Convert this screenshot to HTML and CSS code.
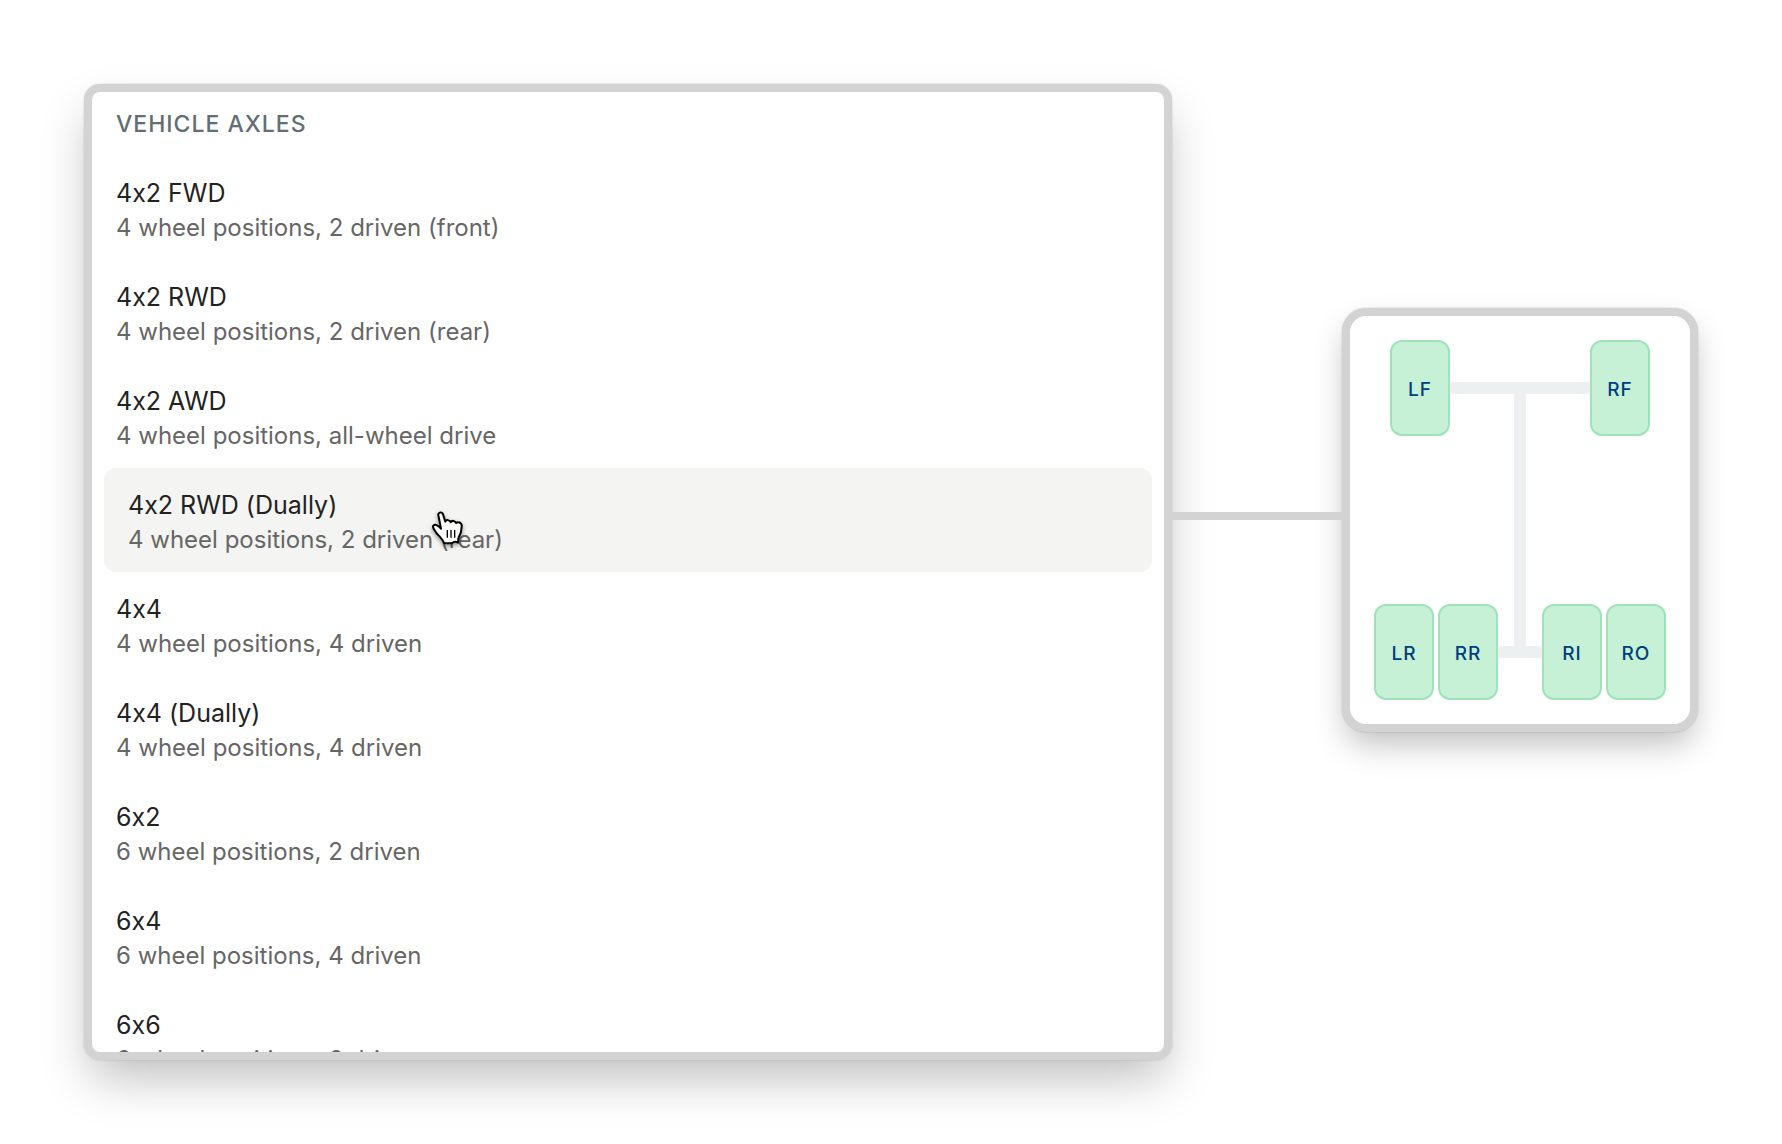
FILE: index.html
```
<!DOCTYPE html>
<html lang="en">
<head>
    <meta charset="utf-8">
    <meta name="viewport" content="width=device-width, initial-scale=1.0">
    <title>Vehicle Axles</title>
    <link rel="stylesheet" href="styles.css">
</head>
<body>
    <main class="stage">
        <section class="panel">
            <h2 class="panel-title">Vehicle Axles</h2>
            <button class="option"><span class="name">4x2 FWD</span><span class="detail">4 wheel positions, 2 driven (front)</span></button>
            <button class="option"><span class="name">4x2 RWD</span><span class="detail">4 wheel positions, 2 driven (rear)</span></button>
            <button class="option"><span class="name">4x2 AWD</span><span class="detail">4 wheel positions, all-wheel drive</span></button>
            <button class="option active">
                <span class="name">4x2 RWD (Dually)</span><span class="detail">4 wheel positions, 2 driven (rear)</span>
                <svg class="cursor" viewBox="0 0 180 180" aria-hidden="true">
                    <path d="M56 50 C51 37 65 33 69 43 L76 65 C78 58 90 59 92 67 C95 60 106 62 108 69 C113 64 125 67 125 77 C126 95 121 105 115 115 L114 128 C107 124 101 124 97 129 C88 131 80 129 72 129 C68 117 55 107 48 97 C43 89 36 83 40 77 C46 71 56 77 63 86 Z" fill="#fff" stroke="#000" stroke-width="6" stroke-linejoin="round"/>
                    <path d="M82 90V113M93 90V113M104 90V113" stroke="#000" stroke-width="4"/>
                </svg>
            </button>
            <button class="option"><span class="name">4x4</span><span class="detail">4 wheel positions, 4 driven</span></button>
            <button class="option"><span class="name">4x4 (Dually)</span><span class="detail">4 wheel positions, 4 driven</span></button>
            <button class="option"><span class="name">6x2</span><span class="detail">6 wheel positions, 2 driven</span></button>
            <button class="option"><span class="name">6x4</span><span class="detail">6 wheel positions, 4 driven</span></button>
            <button class="option"><span class="name">6x6</span><span class="detail">6 wheel positions, 6 driven</span></button>
        </section>
        <div class="preview">
            <div class="connector"></div>
            <div class="diagram">
                <div class="axle">
                    <div class="wheel">LF</div>
                    <div class="bar front"></div>
                    <div class="wheel">RF</div>
                </div>
                <div class="shaft"></div>
                <div class="axle">
                    <div class="dual">
                        <div class="wheel">LR</div>
                        <div class="wheel">RR</div>
                    </div>
                    <div class="bar rear"></div>
                    <div class="dual">
                        <div class="wheel">RI</div>
                        <div class="wheel">RO</div>
                    </div>
                </div>
            </div>
        </div>
    </main>
</body>
</html>
```
FILE: styles.css
```
* {
    box-sizing: border-box;
}
body {
    margin: 0;
    background-color: #fff;
    font-family: Inter, sans-serif;
    font-optical-sizing: none;
    /* keep the x in 4x2 a letter */
    font-feature-settings: "calt" 0;
}
.stage {
    display: flex;
    align-items: flex-start;
    height: 100vh;
    padding: 84px;
}
/* list of axle layouts */
.panel {
    flex: 1;
    height: 100%;
    overflow: hidden;
    background-color: #fff;
    border: 8px solid #d3d3d3;
    border-radius: 16px;
    box-shadow: 0 0 2px rgba(0,0,0,0.2), 0 24px 48px -6px rgba(0,0,0,0.25);
}
.panel-title {
    margin: 0;
    padding: 0 24px;
    font-size: 23px;
    font-weight: 500;
    line-height: 64px;
    letter-spacing: 1px;
    text-transform: uppercase;
    color: #636e72;
}
.option {
    display: block;
    width: 100%;
    padding: 19px 24px 15px;
    background: none;
    border: none;
    border-radius: 12px;
    font-family: inherit;
    font-feature-settings: inherit;
    text-align: left;
    cursor: pointer;
}
.option.active {
    position: relative;
    width: calc(100% - 24px);
    margin: 0 12px;
    background-color: #f4f4f2;
}
.name {
    display: block;
    font-size: 25px;
    line-height: 36px;
    color: #222;
}
.detail {
    display: block;
    font-size: 24px;
    line-height: 34px;
    color: #666;
}
.cursor {
    position: absolute;
    top: 32px;
    left: 316px;
    width: 60px;
    height: 60px;
    filter: drop-shadow(0 2px 2px rgba(0,0,0,0.4));
}
/* wheel diagram of the hovered option */
.preview {
    display: flex;
    align-items: center;
    margin-top: 224px;
}
.connector {
    z-index: 1;
    width: 170px;
    height: 8px;
    margin-bottom: 8px;
    background-color: #d3d3d3;
}
.diagram {
    display: flex;
    flex-direction: column;
    align-items: center;
    padding: 24px;
    background-color: #fff;
    border: 8px solid #d3d3d3;
    border-radius: 24px;
    box-shadow: 0 0 2px rgba(0,0,0,0.2), 0 16px 32px -4px rgba(0,0,0,0.25);
}
.axle {
    display: flex;
    align-items: center;
}
.dual {
    display: flex;
    gap: 4px;
}
.wheel {
    width: 60px;
    height: 96px;
    background-color: #c6f1d6;
    border: 2px solid #9ee4b8;
    border-radius: 12px;
    font-size: 19px;
    font-weight: 500;
    line-height: 95px;
    letter-spacing: 1px;
    text-align: center;
    color: #003f7d;
}
.bar {
    height: 12px;
    background-color: #ecf0f1;
}
.front {
    width: 140px;
}
.rear {
    width: 44px;
}
.shaft {
    width: 12px;
    height: 252px;
    margin: -42px 0;
    background-color: #ecf0f1;
}
```
